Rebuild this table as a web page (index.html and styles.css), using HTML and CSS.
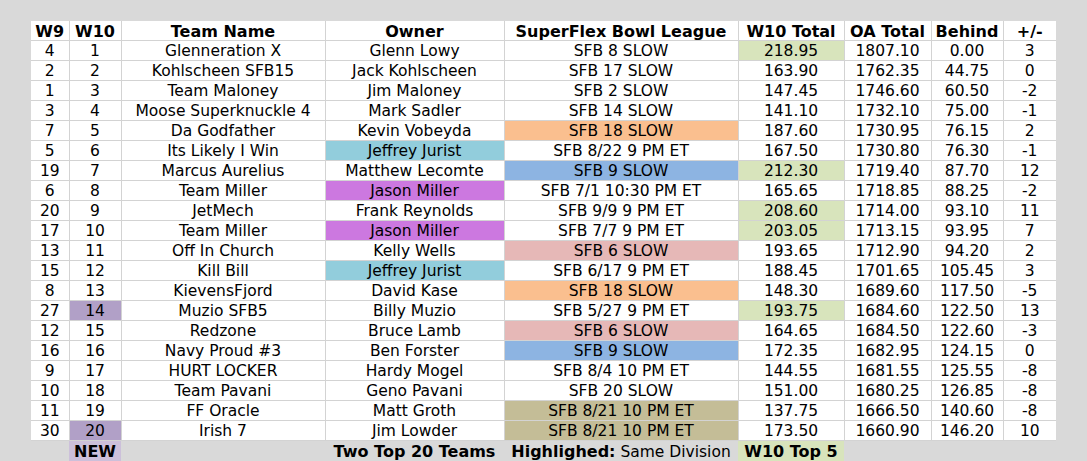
FILE: index.html
```html
<!DOCTYPE html>
<html>
<head>
<meta charset="utf-8">
<link rel="stylesheet" href="styles.css">
</head>
<body>
<table class="sheet">
  <colgroup>
    <col class="c-w9"><col class="c-w10"><col class="c-team"><col class="c-owner"><col class="c-league"><col class="c-total"><col class="c-oa"><col class="c-behind"><col class="c-pm">
  </colgroup>
  <thead>
    <tr class="head"><th>W9</th><th>W10</th><th>Team Name</th><th>Owner</th><th>SuperFlex Bowl League</th><th>W10 Total</th><th>OA Total</th><th>Behind</th><th>+/-</th></tr>
  </thead>
  <tbody>
    <tr><td>4</td><td>1</td><td>Glenneration X</td><td>Glenn Lowy</td><td>SFB 8 SLOW</td><td class="top5">218.95</td><td>1807.10</td><td>0.00</td><td>3</td></tr>
    <tr><td>2</td><td>2</td><td>Kohlscheen SFB15</td><td>Jack Kohlscheen</td><td>SFB 17 SLOW</td><td>163.90</td><td>1762.35</td><td>44.75</td><td>0</td></tr>
    <tr><td>1</td><td>3</td><td>Team Maloney</td><td>Jim Maloney</td><td>SFB 2 SLOW</td><td>147.45</td><td>1746.60</td><td>60.50</td><td>-2</td></tr>
    <tr><td>3</td><td>4</td><td>Moose Superknuckle 4</td><td>Mark Sadler</td><td>SFB 14 SLOW</td><td>141.10</td><td>1732.10</td><td>75.00</td><td>-1</td></tr>
    <tr><td>7</td><td>5</td><td>Da Godfather</td><td>Kevin Vobeyda</td><td class="orange">SFB 18 SLOW</td><td>187.60</td><td>1730.95</td><td>76.15</td><td>2</td></tr>
    <tr><td>5</td><td>6</td><td>Its Likely I Win</td><td class="aqua">Jeffrey Jurist</td><td>SFB 8/22 9 PM ET</td><td>167.50</td><td>1730.80</td><td>76.30</td><td>-1</td></tr>
    <tr><td>19</td><td>7</td><td>Marcus Aurelius</td><td>Matthew Lecomte</td><td class="blue">SFB 9 SLOW</td><td class="top5">212.30</td><td>1719.40</td><td>87.70</td><td>12</td></tr>
    <tr><td>6</td><td>8</td><td>Team Miller</td><td class="violet">Jason Miller</td><td>SFB 7/1 10:30 PM ET</td><td>165.65</td><td>1718.85</td><td>88.25</td><td>-2</td></tr>
    <tr><td>20</td><td>9</td><td>JetMech</td><td>Frank Reynolds</td><td>SFB 9/9 9 PM ET</td><td class="top5">208.60</td><td>1714.00</td><td>93.10</td><td>11</td></tr>
    <tr><td>17</td><td>10</td><td>Team Miller</td><td class="violet">Jason Miller</td><td>SFB 7/7 9 PM ET</td><td class="top5">203.05</td><td>1713.15</td><td>93.95</td><td>7</td></tr>
    <tr><td>13</td><td>11</td><td>Off In Church</td><td>Kelly Wells</td><td class="pink">SFB 6 SLOW</td><td>193.65</td><td>1712.90</td><td>94.20</td><td>2</td></tr>
    <tr><td>15</td><td>12</td><td>Kill Bill</td><td class="aqua">Jeffrey Jurist</td><td>SFB 6/17 9 PM ET</td><td>188.45</td><td>1701.65</td><td>105.45</td><td>3</td></tr>
    <tr><td>8</td><td>13</td><td>KievensFjord</td><td>David Kase</td><td class="orange">SFB 18 SLOW</td><td>148.30</td><td>1689.60</td><td>117.50</td><td>-5</td></tr>
    <tr><td>27</td><td class="new">14</td><td>Muzio SFB5</td><td>Billy Muzio</td><td>SFB 5/27 9 PM ET</td><td class="top5">193.75</td><td>1684.60</td><td>122.50</td><td>13</td></tr>
    <tr><td>12</td><td>15</td><td>Redzone</td><td>Bruce Lamb</td><td class="pink">SFB 6 SLOW</td><td>164.65</td><td>1684.50</td><td>122.60</td><td>-3</td></tr>
    <tr><td>16</td><td>16</td><td>Navy Proud #3</td><td>Ben Forster</td><td class="blue">SFB 9 SLOW</td><td>172.35</td><td>1682.95</td><td>124.15</td><td>0</td></tr>
    <tr><td>9</td><td>17</td><td>HURT LOCKER</td><td>Hardy Mogel</td><td>SFB 8/4 10 PM ET</td><td>144.55</td><td>1681.55</td><td>125.55</td><td>-8</td></tr>
    <tr><td>10</td><td>18</td><td>Team Pavani</td><td>Geno Pavani</td><td>SFB 20 SLOW</td><td>151.00</td><td>1680.25</td><td>126.85</td><td>-8</td></tr>
    <tr><td>11</td><td>19</td><td>FF Oracle</td><td>Matt Groth</td><td class="tan">SFB 8/21 10 PM ET</td><td>137.75</td><td>1666.50</td><td>140.60</td><td>-8</td></tr>
    <tr><td>30</td><td class="new">20</td><td>Irish 7</td><td>Jim Lowder</td><td class="tan">SFB 8/21 10 PM ET</td><td>173.50</td><td>1660.90</td><td>146.20</td><td>10</td></tr>
  </tbody>
  <tfoot>
    <tr class="legend"><td></td><td class="legend-new"><b>NEW</b></td><td></td><td><b>Two Top 20 Teams</b></td><td><b>Highlighed:</b> Same Division</td><td class="top5"><b>W10 Top 5</b></td><td></td><td></td><td></td></tr>
  </tfoot>
</table>
</body>
</html>
```

FILE: styles.css
```css
html, body {
  margin: 0;
  padding: 0;
  background: #d9d9d9;
}

body {
  padding: 21px 0 0 31px;
  font-family: "DejaVu Sans", Verdana, sans-serif;
  font-size: 15.5px;
  color: #000;
}

.sheet {
  border-collapse: collapse;
  table-layout: fixed;
  width: 1025px;
  border-style: hidden;
}

.c-w9 { width: 38px; }
.c-w10 { width: 52px; }
.c-team { width: 204px; }
.c-owner { width: 179px; }
.c-league { width: 234px; }
.c-total { width: 106px; }
.c-oa { width: 87px; }
.c-behind { width: 72px; }
.c-pm { width: 53px; }

.sheet th,
.sheet td {
  border: 1px solid #d3d3d3;
  padding: 2px 0 0 0;
  height: 17px;
  line-height: 17px;
  text-align: center;
  white-space: nowrap;
  overflow: visible;
  background: #fff;
}

.sheet th,
.sheet b {
  font-weight: bold;
  font-size: 16px;
}

.sheet .top5 { background: #d8e4bc; }
.sheet .orange { background: #fabf8f; }
.sheet .aqua { background: #92cddc; }
.sheet .violet { background: #cc78e0; }
.sheet .blue { background: #8db4e2; }
.sheet .pink { background: #e6b8b7; }
.sheet .tan { background: #c4bd97; }
.sheet .new { background: #b1a0c7; }

.sheet .legend td {
  background: #d9d9d9;
  border: none;
  height: 18px;
}

.sheet .legend .legend-new { background: #ccc0da; }
.sheet .legend .top5 { background: #d8e4bc; }
```
